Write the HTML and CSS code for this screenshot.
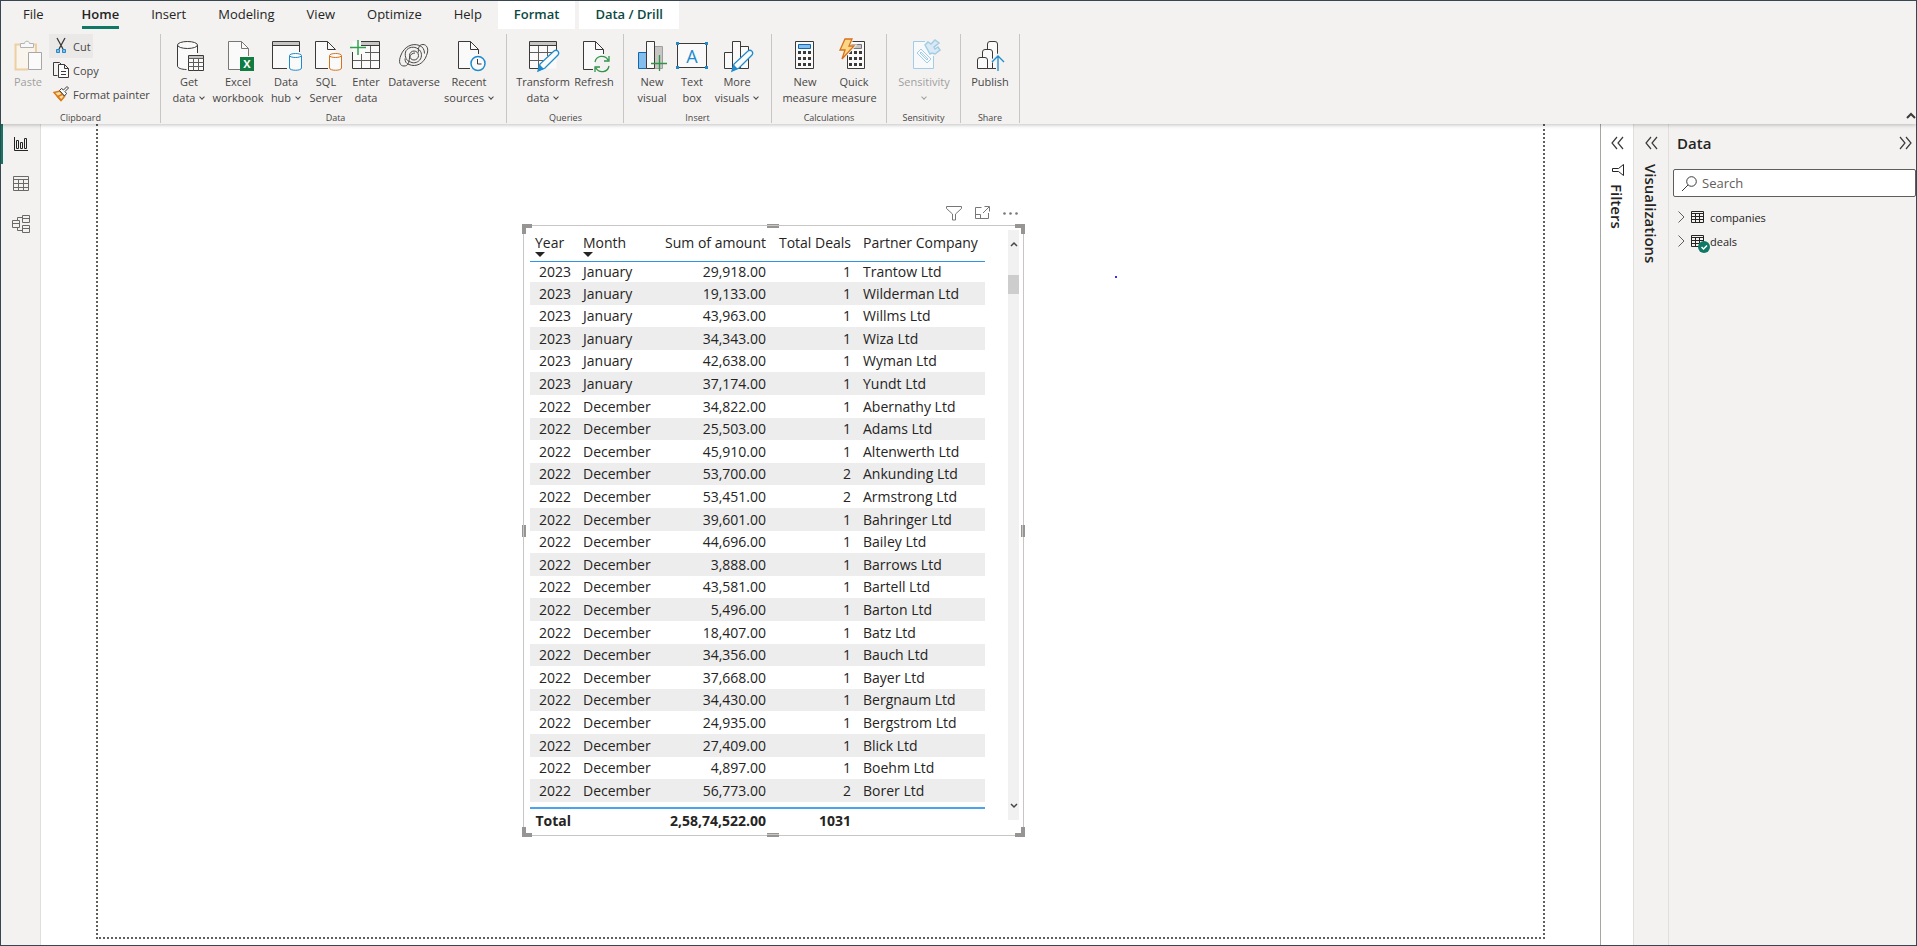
FILE: index.html
```
<!DOCTYPE html>
<html lang="en">
<head>
  <meta charset="UTF-8">
  <meta name="viewport" content="width=device-width, initial-scale=1.0">
  <title>Deals report</title>
  <link rel="stylesheet" href="styles.css">
</head>
<body>
  <header>
    <nav class="tabs">
      <a href="#" class="tab tab-file">File</a>
      <a href="#" class="tab active">Home</a>
      <a href="#" class="tab">Insert</a>
      <a href="#" class="tab">Modeling</a>
      <a href="#" class="tab">View</a>
      <a href="#" class="tab">Optimize</a>
      <a href="#" class="tab">Help</a>
      <a href="#" class="tab context">Format</a>
      <a href="#" class="tab context">Data / Drill</a>
    </nav>

    <div class="ribbon">
      <section class="group clipboard">
        <div class="tools">
          <button class="tool" disabled>
            <svg width="32" height="32" viewBox="0 0 32 32" fill="none"><path d="M8 4.500H3.500V29.500H16M22 4.500h2V12" stroke="#f0cf9f" stroke-width="2"/><path d="M5 6h17v6h-5v16H5z" fill="#faf5ec"/><path d="M8.500 7.500v-4h4c0-3 5-3 5 0h4v4z" fill="#f8f8f8" stroke="#b5b3b1"/><path d="M16.500 12.500h13v17h-13z" fill="#fafafa" stroke="#a9a7a5"/></svg>
            <span>Paste</span>
          </button>
          <div class="small-tools">
            <button class="small-tool cut">
              <svg width="16" height="16" viewBox="0 0 16 16" fill="none"><path d="M4 0l6 11M12 0L6 11" stroke="#3b3a39" stroke-width="1.300"/><path d="M3.500 11.500h3v3h-3zM9.500 11.500h3v3h-3z" fill="#83beec" stroke="#1e8bcd"/></svg>
              <span>Cut</span>
            </button>
            <button class="small-tool">
              <svg width="16" height="16" viewBox="0 0 16 16" fill="none" stroke="#3b3a39"><path d="M4.500 13.500h-4v-13h6l2 2"/><path d="M5.500 2.500h6l4 4v9h-10zM11.500 2.500v4h4M8 9.500h5M8 12.500h5" fill="#fafafa"/></svg>
              <span>Copy</span>
            </button>
            <button class="small-tool">
              <svg width="16" height="16" viewBox="0 0 16 16" fill="none"><path d="M1 6.500l6-1.500 4.500 5.500L8 14.500z" fill="#f8dca0" stroke="#d87a16" stroke-width="1.500"/><path d="M4 10l4 4M5 10.500l4-2" stroke="#d87a16" stroke-width="1.500"/><path d="M6.500 4.500l2-2 2 1.500L14 .5 15.500 2 12 5.500l1.500 2-2 2.500z" fill="#fafafa" stroke="#3b3a39"/></svg>
              <span>Format painter</span>
            </button>
          </div>
        </div>
        <h2>Clipboard</h2>
      </section>

      <section class="group data">
        <div class="tools">
          <button class="tool get-data">
            <svg width="32" height="32" viewBox="0 0 32 32" fill="none"><path d="M4.500 5v21c0 2 4 4 9 4h2V15h8.500V5" fill="#fafafa"/><path d="M4.500 5v21c0 2 4 3.500 9 3.500M24.500 5v8" stroke="#3b3a39"/><ellipse cx="14.500" cy="5" rx="10" ry="3.500" fill="#fafafa" stroke="#3b3a39"/><path d="M15.500 15.500h15v15h-15z" fill="#fafafa" stroke="#3b3a39"/><path d="M16 16h14v2H16z" fill="#c8c6c4"/><path d="M15.500 18.500h15M15.500 22.500h15M15.500 26.500h15M20.500 18.500v12M25.500 18.500v12" stroke="#605e5c"/></svg>
            <span>Get<br>data<i class="caret"></i></span>
          </button>
          <button class="tool excel">
            <svg width="32" height="32" viewBox="0 0 32 32" fill="none"><path d="M6.500 1.500h13l7 7v20.500h-20z" fill="#fafafa"/><path d="M18 29.500H6.500v-28h13l7 7V16M19.500 1.500v7h7" stroke="#797775"/><path d="M18 17h14v14H18z" fill="#107c41"/><text x="25" y="28" text-anchor="middle" class="excel-letter">X</text></svg>
            <span>Excel<br>workbook</span>
          </button>
          <button class="tool hub">
            <svg width="32" height="32" viewBox="0 0 32 32" fill="none"><path d="M2.500 1.500h27v27h-27z" fill="#fafafa"/><path d="M3 2h26v3H3z" fill="#c8c6c4"/><path d="M17 28.500H2.500v-27h27V12M2.500 5.500h27" stroke="#3b3a39"/><path d="M19.500 16v12c0 3 12 3 12 0V16" fill="#fafafa" stroke="#1e8bcd"/><ellipse cx="25.500" cy="15.500" rx="6" ry="2" fill="#fafafa" stroke="#1e8bcd"/></svg>
            <span>Data<br>hub<i class="caret"></i></span>
          </button>
          <button class="tool sql">
            <svg width="32" height="32" viewBox="0 0 32 32" fill="none"><path d="M5.500 1.500h12l8 8v19h-20z" fill="#fafafa"/><path d="M18 28.500H5.500v-27h12l8 8M17.500 1.500v8h8" stroke="#3b3a39"/><path d="M19.500 16v12c0 3 12 3 12 0V16" fill="#fafafa" stroke="#d8721a"/><ellipse cx="25.500" cy="15.500" rx="6" ry="2" fill="#fafafa" stroke="#d8721a"/></svg>
            <span>SQL<br>Server</span>
          </button>
          <button class="tool enter">
            <svg width="32" height="32" viewBox="0 0 32 32" fill="none"><path d="M2.500 1.500h27v27h-27z" fill="#fafafa"/><path d="M11 2h18v3H11z" fill="#c8c6c4"/><path d="M11 1.500h18.500v27h-27V12M11 5.500h18.500" stroke="#3b3a39"/><path d="M15 12.500h14M3 20.500h26M11.500 14v14M20.500 6v22" stroke="#605e5c"/><path d="M0 7.500h16M8 0v15" stroke="#31a24c" stroke-width="1.500"/></svg>
            <span>Enter<br>data</span>
          </button>
          <button class="tool dataverse">
            <svg width="32" height="32" viewBox="0 0 32 32" fill="none" stroke="#484644"><path d="M21.500 5.500C14 2.500 6 7 3 15c-3 7-1 11 3 11 4.500 0 5-4 5.500-8 .5-3.500 3-5 5.500-5"/><path d="M11 24.500c7 3 15-1 17.500-9 3-7 0-11-3.500-11-4.500 0-5 4.500-4.500 8"/><circle cx="16" cy="15.500" r="4.500"/><path d="M7.500 12c1-4 7-6 11-4 5 2 6 7 4 11-2 3-6 5-10 3-4-1-6-5-5-10M21.500 5.500c3 1 5 4 5 8M11 24.500c-3-1-4-3-4-6"/></svg>
            <span>Dataverse</span>
          </button>
          <button class="tool recent">
            <svg width="32" height="32" viewBox="0 0 32 32" fill="none"><path d="M5.500 1.500h12l8 8v19h-20z" fill="#fafafa"/><path d="M17 28.500H5.500v-27h12l8 8V14M17.500 1.500v8h8" stroke="#3b3a39"/><circle cx="25" cy="23.500" r="7" fill="#fafafa" stroke="#1e8bcd" stroke-width="1.500"/><path d="M24.500 19v5h4" stroke="#3b3a39"/></svg>
            <span>Recent<br>sources<i class="caret"></i></span>
          </button>
        </div>
        <h2>Data</h2>
      </section>

      <section class="group queries">
        <div class="tools">
          <button class="tool transform">
            <svg width="32" height="32" viewBox="0 0 32 32" fill="none"><path d="M2.500 1.500h27v27h-27z" fill="#fafafa"/><path d="M3 2h26v3H3z" fill="#c8c6c4"/><path d="M12 28.500H2.500v-27h27V10M2.500 5.500h27" stroke="#3b3a39"/><path d="M3 12.500h22M3 20.500h14M11.500 6v22M20.500 6v10" stroke="#605e5c"/><path d="M11 31l2-7L27 11c3-2 6 1 4 4L18 28z" fill="#fafafa" stroke="#1e8bcd" stroke-width="1.300"/><path d="M11 31l2-6 4 4z" fill="#1e8bcd"/></svg>
            <span>Transform<br>data<i class="caret"></i></span>
          </button>
          <button class="tool refresh">
            <svg width="32" height="32" viewBox="0 0 32 32" fill="none"><path d="M5.500 1.500h12l8 8v19h-20z" fill="#fafafa"/><path d="M15 29.500H5.500v-28h12l8 8V14M17.500 1.500v8h8" stroke="#3b3a39"/><circle cx="24" cy="24" r="7" fill="#f3f2f1"/><path d="M17 22a7 7 0 0 1 13-2M31 16v5h-5M31 26a7 7 0 0 1-13 2M17 32v-5h5" stroke="#31944a" stroke-width="1.300"/></svg>
            <span>Refresh</span>
          </button>
        </div>
        <h2>Queries</h2>
      </section>

      <section class="group insert">
        <div class="tools">
          <button class="tool new-visual">
            <svg width="32" height="32" viewBox="0 0 32 32" fill="none"><path d="M2.500 12.500h8v16h-8z" fill="#83beec" stroke="#1068b0"/><path d="M18.500 6.500h8v22h-8z" fill="#c8c6c4" stroke="#a19f9d"/><path d="M10.500 1.500h8v27h-8z" fill="#fafafa" stroke="#3b3a39"/><path d="M15 23.500h16M23.500 15v16" stroke="#31944a" stroke-width="1.300"/></svg>
            <span>New<br>visual</span>
          </button>
          <button class="tool textbox">
            <svg width="32" height="32" viewBox="0 0 32 32" fill="none"><path d="M1.500 3.500h29v24h-29z" fill="#fafafa" stroke="#3b3a39"/><path d="M0 2h3v3H0zM29 2h3v3h-3zM0 26h3v3H0zM29 26h3v3h-3z" fill="#1e8bcd"/><text x="16" y="23" text-anchor="middle" class="box-letter">A</text></svg>
            <span>Text<br>box</span>
          </button>
          <button class="tool more">
            <svg width="32" height="32" viewBox="0 0 32 32" fill="none"><path d="M3.500 12.500h8v16h-8zM19.500 6.500h8v22h-8zM11.500 1.500h8v27h-8z" fill="#fafafa" stroke="#3b3a39"/><path d="M11 31l2-7L27 11c3-2 6 1 4 4L18 28z" fill="#fafafa" stroke="#1e8bcd" stroke-width="1.300"/><path d="M11 31l2-6 4 4z" fill="#1e8bcd"/></svg>
            <span>More<br>visuals<i class="caret"></i></span>
          </button>
        </div>
        <h2>Insert</h2>
      </section>

      <section class="group calculations">
        <div class="tools">
          <button class="tool measure">
            <svg width="32" height="32" viewBox="0 0 32 32" fill="none"><path d="M6.500 1.500h18v27h-18z" fill="#fafafa" stroke="#3b3a39"/><path d="M9.500 4.500h12v4h-12z" fill="#83beec" stroke="#1068b0"/><path d="M9 12.500h13M9 18.500h13M9 24.500h13" stroke="#3b3a39" stroke-width="3" stroke-dasharray="3 2"/></svg>
            <span>New<br>measure</span>
          </button>
          <button class="tool quick">
            <svg width="32" height="32" viewBox="0 0 32 32" fill="none"><path d="M9.500 1.500h17v27h-17z" fill="#fafafa" stroke="#3b3a39"/><path d="M12.500 4.500h11v4h-11z" fill="#c8c6c4" stroke="#797775"/><path d="M11 12.500h13M11 18.500h13M11 24.500h13" stroke="#3b3a39" stroke-width="3" stroke-dasharray="3 2"/><path d="M7-1h7l-3 7h5L5 18l3-9H2z" fill="#fbd686" stroke="#f3f2f1" stroke-width="3"/><path d="M7-1h7l-3 7h5L4 19l3-9H2z" fill="#fbd686" stroke="#d8721a" stroke-width="1.300"/></svg>
            <span>Quick<br>measure</span>
          </button>
        </div>
        <h2>Calculations</h2>
      </section>

      <section class="group sensitivity">
        <div class="tools">
          <button class="tool" disabled>
            <svg width="32" height="32" viewBox="0 0 32 32" fill="none" stroke="#a3cce6"><path d="M17 1.500H5.500v27h20V16" fill="#f7f9fa"/><path d="M9 13l4-4 10 10-4 4zM12 13l7 7 1-1-7-7z"/><path d="M17 5l3-3 3 2 4-4 4 3-5 4 1 2 3-2 2 3-5 4-3-1-2 1z" fill="#d9eaf5" stroke-width="1.500"/></svg>
            <span>Sensitivity<br><i class="caret"></i></span>
          </button>
        </div>
        <h2>Sensitivity</h2>
      </section>

      <section class="group share">
        <div class="tools">
          <button class="tool publish">
            <svg width="32" height="32" viewBox="0 0 32 32" fill="none"><path d="M13.500 10V4q0-2.500 2.500-2.500h5q2.500 0 2.500 2.500v24.500h-8" fill="#fafafa" stroke="#3b3a39"/><path d="M8.500 18v-6q0-2.500 2.500-2.500h5q2.500 0 2.500 2.500v16.500H12" fill="#fafafa" stroke="#3b3a39"/><path d="M3.500 20q0-2.500 2.500-2.500h5q2.500 0 2.500 2.500v8.500h-10z" fill="#fafafa" stroke="#3b3a39"/><path d="M24 31V16M18 22l6-6 6 6" stroke="#f3f2f1" stroke-width="4"/><path d="M24 31V16M18 22l6-6 6 6" stroke="#1e8bcd" stroke-width="1.300"/></svg>
            <span>Publish</span>
          </button>
        </div>
        <h2>Share</h2>
      </section>

      <button class="collapse" aria-label="Collapse ribbon">
        <svg width="10" height="6" viewBox="0 0 10 6" fill="none" stroke="#3b3a39" stroke-width="2"><path d="M1 5l4-4 4 4"/></svg>
      </button>
    </div>
  </header>

  <div class="workspace">
    <nav class="rail">
      <button class="selected" aria-label="Report view">
        <svg width="16" height="16" viewBox="0 0 16 16" fill="none" stroke="#252423"><path d="M1.500 1v13.500H15"/><path d="M3.500 4.500h2v8h-2zM7.500 6.500h2v6h-2zM11.500 2.500h2v10h-2z"/></svg>
      </button>
      <button aria-label="Table view">
        <svg width="16" height="16" viewBox="0 0 16 16" fill="none" stroke="#6b6967"><path d="M.5.500h15v14H.5zM.5 3.500h15M.5 7.500h15M.5 11.500h15M5.500 3v12M10.500 3v12"/></svg>
      </button>
      <button aria-label="Model view">
        <svg width="18" height="18" viewBox="0 0 18 18" fill="none" stroke="#6b6967"><path d="M.5 5.500h7v7h-7zM.5 8.500h7M10.500.500h7v7h-7zM10.500 3.500h7M10.500 10.500h7v7h-7zM10.500 13.500h7M5.500 5V2.500h5M5.500 13v2.500h5"/></svg>
      </button>
    </nav>

    <main>
      <div class="page">
        <div class="visual">
          <div class="visual-actions">
            <button aria-label="Filters on this visual"><svg width="16" height="15" viewBox="0 0 16 15" fill="none" stroke="#797775"><path d="M.5.500h15v2l-6 5.500v6h-3V8l-6-5.500z"/></svg></button>
            <button aria-label="Focus mode"><svg width="15" height="14" viewBox="0 0 15 14" fill="none" stroke="#797775"><path d="M6.500 1.500h-6v11h13V7M.5 8.500h5v4M9.500.500h5v5M14 1L8 7"/></svg></button>
            <button aria-label="More options"><svg width="15" height="3" viewBox="0 0 15 3" fill="#797775"><circle cx="1.500" cy="1.500" r="1.300"/><circle cx="7.500" cy="1.500" r="1.300"/><circle cx="13.500" cy="1.500" r="1.300"/></svg></button>
          </div>

          <table>
            <colgroup><col class="c-year"><col class="c-month"><col class="c-sum"><col class="c-deals"><col></colgroup>
            <thead>
              <tr><th class="sorted">Year</th><th class="sorted">Month</th><th class="num">Sum of amount</th><th class="num">Total Deals</th><th>Partner Company</th></tr>
            </thead>
            <tbody>
              <tr><td>2023</td><td>January</td><td>29,918.00</td><td>1</td><td>Trantow Ltd</td></tr>
              <tr><td>2023</td><td>January</td><td>19,133.00</td><td>1</td><td>Wilderman Ltd</td></tr>
              <tr><td>2023</td><td>January</td><td>43,963.00</td><td>1</td><td>Willms Ltd</td></tr>
              <tr><td>2023</td><td>January</td><td>34,343.00</td><td>1</td><td>Wiza Ltd</td></tr>
              <tr><td>2023</td><td>January</td><td>42,638.00</td><td>1</td><td>Wyman Ltd</td></tr>
              <tr><td>2023</td><td>January</td><td>37,174.00</td><td>1</td><td>Yundt Ltd</td></tr>
              <tr><td>2022</td><td>December</td><td>34,822.00</td><td>1</td><td>Abernathy Ltd</td></tr>
              <tr><td>2022</td><td>December</td><td>25,503.00</td><td>1</td><td>Adams Ltd</td></tr>
              <tr><td>2022</td><td>December</td><td>45,910.00</td><td>1</td><td>Altenwerth Ltd</td></tr>
              <tr><td>2022</td><td>December</td><td>53,700.00</td><td>2</td><td>Ankunding Ltd</td></tr>
              <tr><td>2022</td><td>December</td><td>53,451.00</td><td>2</td><td>Armstrong Ltd</td></tr>
              <tr><td>2022</td><td>December</td><td>39,601.00</td><td>1</td><td>Bahringer Ltd</td></tr>
              <tr><td>2022</td><td>December</td><td>44,696.00</td><td>1</td><td>Bailey Ltd</td></tr>
              <tr><td>2022</td><td>December</td><td>3,888.00</td><td>1</td><td>Barrows Ltd</td></tr>
              <tr><td>2022</td><td>December</td><td>43,581.00</td><td>1</td><td>Bartell Ltd</td></tr>
              <tr><td>2022</td><td>December</td><td>5,496.00</td><td>1</td><td>Barton Ltd</td></tr>
              <tr><td>2022</td><td>December</td><td>18,407.00</td><td>1</td><td>Batz Ltd</td></tr>
              <tr><td>2022</td><td>December</td><td>34,356.00</td><td>1</td><td>Bauch Ltd</td></tr>
              <tr><td>2022</td><td>December</td><td>37,668.00</td><td>1</td><td>Bayer Ltd</td></tr>
              <tr><td>2022</td><td>December</td><td>34,430.00</td><td>1</td><td>Bergnaum Ltd</td></tr>
              <tr><td>2022</td><td>December</td><td>24,935.00</td><td>1</td><td>Bergstrom Ltd</td></tr>
              <tr><td>2022</td><td>December</td><td>27,409.00</td><td>1</td><td>Blick Ltd</td></tr>
              <tr><td>2022</td><td>December</td><td>4,897.00</td><td>1</td><td>Boehm Ltd</td></tr>
              <tr><td>2022</td><td>December</td><td>56,773.00</td><td>2</td><td>Borer Ltd</td></tr>
            </tbody>
            <tfoot>
              <tr><td>Total</td><td></td><td>2,58,74,522.00</td><td>1031</td><td></td></tr>
            </tfoot>
          </table>

          <div class="scrollbar">
            <svg width="8" height="5" viewBox="0 0 8 5" fill="none" stroke="#484644" stroke-width="1.500"><path d="M1 4l3-3 3 3"/></svg>
            <div class="thumb"></div>
            <svg width="8" height="5" viewBox="0 0 8 5" fill="none" stroke="#484644" stroke-width="1.500"><path d="M1 1l3 3 3-3"/></svg>
          </div>

          <i class="handle tl"></i><i class="handle tr"></i><i class="handle bl"></i><i class="handle br"></i>
          <i class="grip top"></i><i class="grip bottom"></i><i class="grip left"></i><i class="grip right"></i>
        </div>
        <i class="dot"></i>
      </div>
    </main>

    <aside class="pane filters">
      <button class="expand" aria-label="Expand filters"><svg width="13" height="12" viewBox="0 0 13 12" fill="none" stroke="#3b3a39" stroke-width="1.200"><path d="M6 0L1 6l5 6M12 0L7 6l5 6"/></svg></button>
      <h3><svg width="13" height="12" viewBox="0 0 13 12" fill="none" stroke="#252423"><path d="M12.500.500v11l-5-4h-6v-3h6z"/></svg><span>Filters</span></h3>
    </aside>

    <aside class="pane visualizations">
      <button class="expand" aria-label="Expand visualizations"><svg width="13" height="12" viewBox="0 0 13 12" fill="none" stroke="#3b3a39" stroke-width="1.200"><path d="M6 0L1 6l5 6M12 0L7 6l5 6"/></svg></button>
      <h3><span>Visualizations</span></h3>
    </aside>

    <aside class="fields">
      <div class="fields-head">
        <h3>Data</h3>
        <button aria-label="Collapse data pane"><svg width="13" height="12" viewBox="0 0 13 12" fill="none" stroke="#3b3a39" stroke-width="1.200"><path d="M1 0l5 6-5 6M7 0l5 6-5 6"/></svg></button>
      </div>
      <div class="search">
        <svg width="15" height="15" viewBox="0 0 15 15" fill="none" stroke="#3b3a39"><circle cx="9.500" cy="5.500" r="4.800"/><path d="M6 9l-6 6"/></svg>
        <input type="text" placeholder="Search" aria-label="Search">
      </div>
      <button class="field">
        <svg width="7" height="12" viewBox="0 0 7 12" fill="none" stroke="#605e5c"><path d="M.5.500L6 6 .5 11.500"/></svg>
        <svg width="13" height="12" viewBox="0 0 13 12" fill="none" stroke="#252423"><path d="M.5.500h12v11H.5zM.5 2.500h12M.5 5.500h12M.5 8.500h12M4.500 2v10M8.500 2v10"/></svg>
        <span>companies</span>
      </button>
      <button class="field">
        <svg width="7" height="12" viewBox="0 0 7 12" fill="none" stroke="#605e5c"><path d="M.5.500L6 6 .5 11.500"/></svg>
        <svg width="13" height="12" viewBox="0 0 13 12" fill="none" stroke="#252423"><path d="M.5.500h12v11H.5zM.5 2.500h12M.5 5.500h12M.5 8.500h12M4.500 2v10M8.500 2v10"/><circle cx="13" cy="12" r="6" fill="#117865" stroke="none"/><path d="M10.500 12l2 2 3.500-3.500" stroke="#fff" stroke-width="1.500"/></svg>
        <span>deals</span>
      </button>
    </aside>
  </div>
</body>
</html>
```
FILE: styles.css
```
:root {
  --clr-chrome: #f3f2f1;
  --clr-text: #252423;
  --clr-text-soft: #484644;
  --clr-green: #117865;
  --clr-line: #c8c6c4;
}
* { margin: 0; padding: 0; box-sizing: border-box; }
body {
  font-family: 'Open Sans', 'Noto Sans', sans-serif;
  color: var(--clr-text);
  background: #fff;
  height: 100vh;
  border: 1px solid #37474f;
  display: flex;
  flex-direction: column;
  overflow: hidden;
}
button {
  background: none;
  border: none;
  font: inherit;
  color: inherit;
}
svg { display: block; flex: none; overflow: visible; }

/* Ribbon */
header {
  background: var(--clr-chrome);
  box-shadow: 0 1px 4px rgba(0,0,0,0.25);
  position: relative;
  z-index: 1;
}
.tabs { display: flex; height: 28px; }
.tab {
  padding: 0 16px;
  font-size: 13px;
  line-height: 27px;
  color: var(--clr-text);
  text-decoration: none;
  white-space: nowrap;
}
.tab-file { padding: 0 22px; }
.tab.active {
  font-weight: 600;
  padding: 0;
  margin: 0 16px;
  border-bottom: 3px solid var(--clr-green);
}
.tab.context {
  background: #fff;
  color: #0b4a43;
  font-weight: 600;
  margin-right: 4px;
}
.ribbon {
  display: flex;
  padding: 5px 0 1px;
  height: 95px;
}
.group {
  border-right: 1px solid var(--clr-line);
  display: flex;
  flex-direction: column;
  justify-content: space-between;
}
.group h2 {
  font-size: 9px;
  font-weight: 400;
  line-height: 10px;
  text-align: center;
  color: var(--clr-text-soft);
}
.clipboard { width: 160px; }
.data { width: 346px; padding-left: 4px; }
.queries { width: 117px; padding-left: 9px; }
.insert { width: 148px; padding-left: 8px; }
.calculations { width: 115px; padding-left: 8px; }
.sensitivity { width: 74px; }
.share { width: 59px; }
.queries h2, .insert h2, .calculations h2 { margin-left: -8px; }
.tools { display: flex; }
.tool {
  display: flex;
  flex-direction: column;
  align-items: center;
  flex: none;
  width: 46px;
  padding-top: 6px;
  font-size: 11px;
  line-height: 16px;
  text-align: center;
  white-space: nowrap;
  color: var(--clr-text-soft);
}
.tool span { margin-top: 2px; }
.tool:disabled { color: #a19f9d; }
.clipboard .tool { width: 42px; margin-left: 6px; }
.get-data { width: 48px; }
.excel, .measure, .more { width: 50px; }
.sql { width: 34px; }
.dataverse { width: 50px; }
.recent { width: 60px; }
.transform { width: 54px; }
.refresh, .quick { width: 48px; }
.new-visual, .textbox { width: 40px; }
.sensitivity .tool { width: 74px; }
.share .tool { width: 58px; }
.caret {
  display: inline-block;
  width: 4px;
  height: 4px;
  border: solid currentColor;
  border-width: 0 1px 1px 0;
  transform: rotate(45deg);
  margin: 0 1px 3px 5px;
}
.sensitivity .caret { margin-left: 1px; }
.excel-letter { font-size: 11px; font-weight: 700; fill: #fff; }
.box-letter { font-size: 18px; fill: #1e8bcd; }
.small-tools { display: flex; flex-direction: column; align-items: flex-start; }
.small-tool {
  display: flex;
  align-items: center;
  gap: 4px;
  height: 24px;
  padding: 0 2px 0 4px;
  font-size: 11px;
  white-space: nowrap;
  color: var(--clr-text-soft);
}
.cut { background: #ebe9e8; }
.collapse { margin: auto 0 4px auto; }

/* Workspace */
.workspace { flex: 1; display: flex; min-height: 0; }
.rail {
  width: 40px;
  background: var(--clr-chrome);
  border-right: 1px solid #e1dfdd;
  display: flex;
  flex-direction: column;
}
.rail button {
  height: 40px;
  display: flex;
  align-items: center;
  justify-content: center;
  padding-right: 2px;
  border-left: 2px solid transparent;
}
.rail .selected { border-color: var(--clr-green); }
main { flex: 1; padding: 0 55px 6px; min-width: 0; }
.page {
  height: 100%;
  border: 2px dotted #605e5c;
  border-top: none;
  position: relative;
}

/* Visual placed on the free report canvas */
.visual {
  position: absolute;
  top: 101px;
  left: 425px;
  width: 501px;
  border: 1px solid var(--clr-line);
  padding: 4px 4px 2px 6px;
  display: flex;
  justify-content: space-between;
}
.visual-actions {
  position: absolute;
  right: 5px;
  bottom: 100%;
  height: 26px;
  display: flex;
  align-items: center;
  gap: 13px;
}
table {
  width: 455px;
  table-layout: fixed;
  border-spacing: 0;
  font-size: 14px;
  line-height: 20px;
}
.c-year { width: 48px; }
.c-month { width: 80px; }
.c-sum { width: 115px; }
.c-deals { width: 85px; }
th, td { padding: 0 7px 0 5px; text-align: left; white-space: nowrap; }
th {
  height: 32px;
  padding-top: 3px;
  font-weight: 400;
  vertical-align: top;
  border-bottom: 1px solid #2e96e6;
  position: relative;
}
th.num { text-align: right; }
th.sorted::after {
  content: "";
  position: absolute;
  left: 5px;
  bottom: 4px;
  border: 5px solid transparent;
  border-top-color: var(--clr-text);
  border-bottom: none;
}
tbody tr { height: 23px; }
tbody tr:first-child { height: 20px; }
tbody tr:nth-child(5n+3), tbody tr:nth-child(5n+5) { height: 22px; }
tbody tr:nth-child(even) { background: #ededed; }
tbody::after { content: ""; display: block; height: 5px; }
td:nth-child(1), td:nth-child(3), td:nth-child(4) { text-align: right; }
tfoot td {
  height: 26px;
  font-weight: 700;
  border-top: 2px solid #4aa3ee;
}
.scrollbar {
  width: 11px;
  margin-bottom: 13px;
  background: #f1f1f1;
  display: flex;
  flex-direction: column;
  align-items: center;
  padding: 12px 0;
}
.thumb { width: 100%; height: 19px; margin: 28px 0 auto; background: #cdcdcd; }
.handle {
  position: absolute;
  width: 10px;
  height: 10px;
  border: 0 solid #979593;
}
.tl { top: -2px; left: -2px; border-width: 4px 0 0 4px; }
.tr { top: -2px; right: -2px; border-width: 4px 4px 0 0; }
.bl { bottom: -2px; left: -2px; border-width: 0 0 4px 4px; }
.br { bottom: -2px; right: -2px; border-width: 0 4px 4px 0; }
.grip {
  position: absolute;
  width: 12px;
  height: 4px;
  background: var(--clr-line);
  border: 0 solid #979593;
}
.grip.top, .grip.bottom { left: calc(50% - 7px); border-width: 1px 0 2px; }
.grip.left, .grip.right {
  top: calc(50% - 6px);
  width: 4px;
  height: 12px;
  border-width: 0 2px 0 1px;
}
.grip.top { top: -2px; }
.grip.bottom { bottom: -2px; }
.grip.left { left: -2px; }
.grip.right { right: -2px; }
.dot {
  position: absolute;
  top: 152px;
  left: 1017px;
  width: 2px;
  height: 2px;
  background: #3b2bff;
}

/* Side panes */
.pane {
  display: flex;
  flex-direction: column;
  align-items: center;
  padding-top: 13px;
}
.pane h3 {
  display: flex;
  flex-direction: column;
  align-items: center;
  gap: 8px;
  margin-top: 15px;
  font-size: 15px;
  line-height: 20px;
  font-weight: 600;
}
.pane span { writing-mode: vertical-rl; }
.filters { width: 33px; border-left: 1px solid #a8a6a4; }
.visualizations { width: 35px; background: var(--clr-chrome); border-left: 1px solid #e1dfdd; }
.fields { width: 248px; background: var(--clr-chrome); border-left: 1px solid #e1dfdd; }
.fields-head {
  display: flex;
  align-items: center;
  justify-content: space-between;
  height: 38px;
  padding: 0 4px 0 8px;
}
.fields-head h3 { font-size: 15px; font-weight: 600; }
.search {
  display: flex;
  align-items: center;
  gap: 5px;
  height: 28px;
  margin: 7px 0 8px 4px;
  padding-left: 8px;
  background: #fff;
  border: 1px solid #605e5c;
  border-radius: 2px;
}
.search input {
  flex: 1;
  min-width: 0;
  border: none;
  outline: none;
  font: inherit;
  font-size: 13px;
}
.search input::placeholder { color: #605e5c; opacity: 1; }
.field {
  display: flex;
  align-items: center;
  gap: 6px;
  width: 100%;
  height: 24px;
  padding-left: 9px;
  font-size: 11px;
}
```
